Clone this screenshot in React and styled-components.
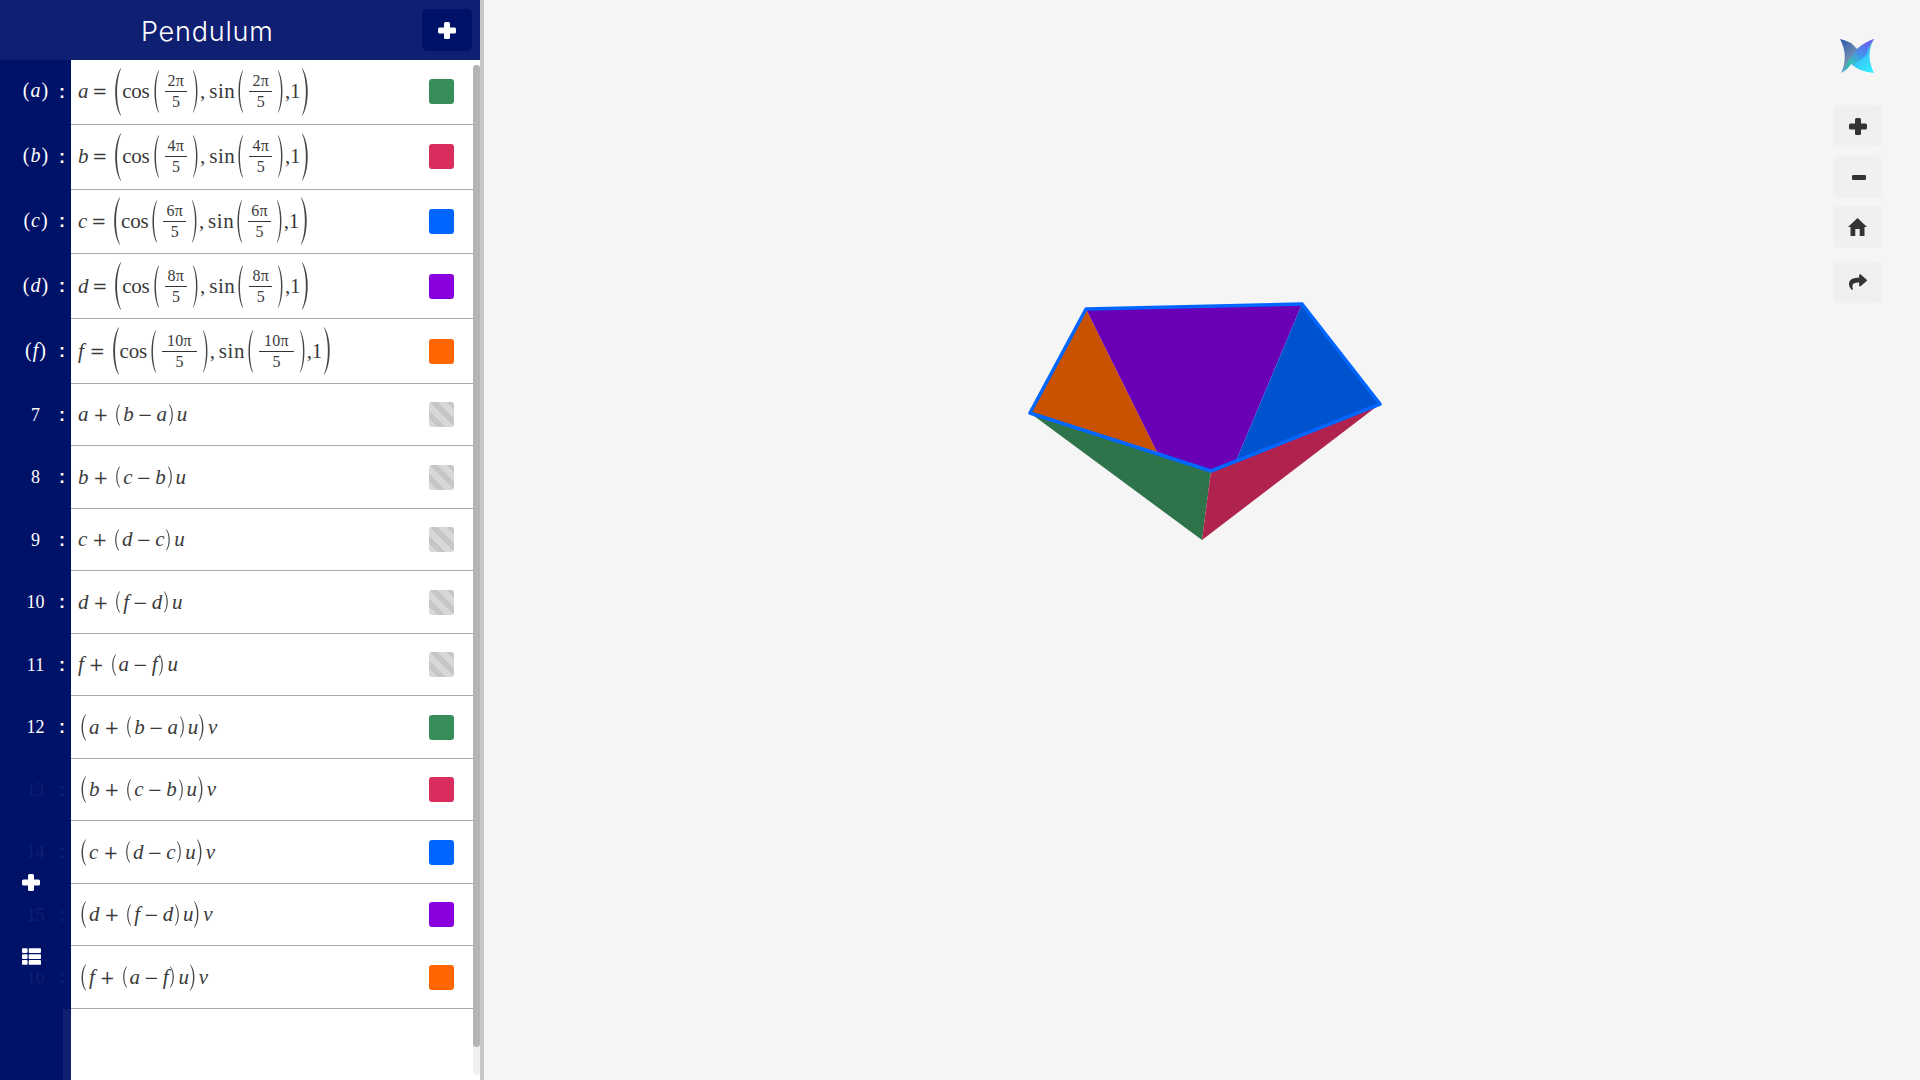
import React from "react";
import styled, { createGlobalStyle } from "styled-components";
import { FaShare, FaThList } from "react-icons/fa";

const GlobalStyle = createGlobalStyle`
  html, body {
    margin: 0;
    height: 100%;
    overflow: hidden;
    background: #f5f5f5;
  }
  #root {
    height: 100%;
  }
`;

const NAVY = "#001268";
const HEADER = "#0f2072";

const Page = styled.div`
  display: flex;
  height: 100vh;
  font-family: "Liberation Serif", serif;
`;

const Sidebar = styled.aside`
  position: relative;
  display: flex;
  flex-direction: column;
  flex: none;
  width: 480px;
  background: #fff;
`;

const Header = styled.header`
  display: flex;
  align-items: center;
  flex: none;
  height: 60px;
  background: ${HEADER};
  padding: 0 8px 0 141px;
  box-sizing: border-box;
`;

const Title = styled.h1`
  flex: 1;
  margin: 0;
  padding-top: 2px;
  font-family: Inter, sans-serif;
  font-size: 27px;
  font-weight: 300;
  letter-spacing: 0.8px;
  color: #fff;
`;

const HeaderButton = styled.button`
  display: flex;
  align-items: center;
  justify-content: center;
  width: 50px;
  height: 42px;
  padding: 0;
  border: 0;
  border-radius: 5px;
  background: ${NAVY};
  color: #fff;
`;

const Body = styled.div`
  display: flex;
  flex: 1;
  min-height: 0;
`;

const List = styled.div`
  display: flex;
  flex-direction: column;
  flex: 1;
  min-width: 0;
`;

const Row = styled.div`
  display: flex;
  flex: none;
  height: ${(p) => (p.$tall ? "64.8px" : "62.5px")};
`;

const LabelCell = styled.div`
  display: flex;
  align-items: center;
  flex: none;
  width: 71px;
  background: ${NAVY};
  font-size: 18px;
  color: ${(p) => (p.$dim ? "#0f2072" : "#fff")};
`;

const LabelName = styled.span`
  flex: none;
  width: 39px;
  margin-left: 16px;
  padding-bottom: ${(p) => (p.$big ? 3 : 0)}px;
  font-size: ${(p) => (p.$big ? 20 : 18)}px;
  text-align: center;
  white-space: nowrap;
`;

const LabelColon = styled.span`
  margin-left: 4px;
  font-family: "Liberation Sans", sans-serif;
  font-weight: 700;
`;

const LabelVar = styled.i`
  margin: 0 1px;
`;

const Content = styled.div`
  display: flex;
  align-items: center;
  flex: 1;
  min-width: 0;
  padding: 0 19px 0 7px;
  border-bottom: 1px solid #aaa;
  background: #fff;
`;

const Formula = styled.div`
  display: flex;
  align-items: center;
  flex: 1;
  font-size: 21px;
  letter-spacing: -0.2px;
  color: #3a3a3a;
  white-space: nowrap;
`;

const Var = styled.i`
  margin-right: ${(p) => p.$after || 0}px;
`;

const Op = styled.span`
  margin: ${(p) => p.$margin || "0 3px"};
  font-family: "DejaVu Serif", serif;
  font-size: 18px;
  font-weight: 300;
`;

const Word = styled.span`
  margin-left: ${(p) => p.$before || 0}px;
  letter-spacing: ${(p) => p.$tracking ?? -0.2}px;
`;

const Fraction = styled.span`
  display: inline-flex;
  flex-direction: column;
  align-items: center;
  margin: 0 6px;
  font-size: 16px;
  line-height: 18px;
`;

const Numerator = styled.span`
  padding: 0 ${(p) => (p.$wide ? 5 : 3)}px 1px;
  border-bottom: 1px solid #333;
  letter-spacing: 0.2px;
`;

const Denominator = styled.span`
  padding-top: 1px;
`;

const DelimSvg = styled.svg`
  flex: none;
  display: block;
  margin: ${(p) => p.$margin || "0"};
  transform: ${(p) => (p.$flip ? "scaleX(-1)" : "none")};
`;

const Swatch = styled.span`
  flex: none;
  width: 25px;
  height: 25px;
  border-radius: 3px;
  background: ${(p) =>
    p.$color ||
    "repeating-linear-gradient(45deg, #d8d8d8 0, #d8d8d8 6px, #c6c6c6 6px, #c6c6c6 12px)"};
`;

const Filler = styled.div`
  display: flex;
  flex: 1;
`;

const FillerGutter = styled.div`
  flex: none;
  width: 71px;
  background: ${NAVY};
  box-sizing: border-box;
  border-right: 8px solid ${HEADER};
`;

const Track = styled.div`
  flex: none;
  width: 7px;
  margin: 5px 0;
  border-radius: 4px;
  background: #f0f0f0;
`;

const Thumb = styled.div`
  height: 982px;
  border-radius: 4px;
  background: #b4b4b4;
`;

const SideAction = styled.span`
  position: absolute;
  left: 0;
  top: ${(p) => p.$top}px;
  display: flex;
  align-items: center;
  justify-content: center;
  width: 62px;
  height: ${(p) => p.$height}px;
  background: ${(p) => (p.$solid ? NAVY : "transparent")};
  color: #fff;
  font-size: 19px;
`;

const Divider = styled.div`
  flex: none;
  width: 4px;
  background: #c8c8c8;
`;

const Canvas = styled.main`
  position: relative;
  flex: 1;
  background: #f5f5f5;
`;

const Scene = styled.svg`
  position: absolute;
  left: 0;
  top: 0;
  width: 100%;
  height: 100%;
`;

const Tools = styled.div`
  position: absolute;
  top: 39px;
  right: 38px;
  display: flex;
  flex-direction: column;
  align-items: center;
  width: 49px;
`;

const Logo = styled.svg`
  display: block;
  margin-bottom: 31px;
`;

const ToolButton = styled.button`
  display: flex;
  align-items: center;
  justify-content: center;
  width: 49px;
  height: 42px;
  margin-bottom: ${(p) => p.$gap ?? 9}px;
  padding: 0;
  border: 0;
  border-radius: 5px;
  background: #f0f0f0;
  color: #333;
  font-size: 18px;
`;

function PlusIcon() {
  return (
    <svg width="18" height="17" viewBox="0 0 18 17" fill="currentColor">
      <rect x="6" y="0" width="6" height="17" rx="1.5" />
      <rect x="0" y="5.5" width="18" height="6" rx="1.5" />
    </svg>
  );
}

function MinusIcon() {
  return (
    <svg width="14" height="5" viewBox="0 0 14 5" fill="currentColor" style={{ marginLeft: 3 }}>
      <rect width="14" height="5" rx="1.2" />
    </svg>
  );
}

function HomeIcon() {
  return (
    <svg width="19" height="18" viewBox="0 0 19 18" fill="currentColor">
      <path d="M9.5 0 L19 9 L16.5 9 L16.5 18 L11.7 18 L11.7 11 L7.3 11 L7.3 18 L2.5 18 L2.5 9 L0 9 Z" />
    </svg>
  );
}

function Delim({ h, w = 7, right, margin }) {
  const path = `M${w} 0 C${w * 0.15} ${h * 0.2} ${w * 0.15} ${h * 0.8} ${w} ${h} L${w} ${h - 0.8} C${w * 0.42} ${h * 0.75} ${w * 0.42} ${h * 0.25} ${w} 0.8 Z`;
  return (
    <DelimSvg width={w} height={h} viewBox={`0 0 ${w} ${h}`} $flip={right} $margin={margin}>
      <path d={path} fill="#444" />
    </DelimSvg>
  );
}

function Frac({ num }) {
  return (
    <Fraction>
      <Numerator $wide={num > 9}>{num}π</Numerator>
      <Denominator>5</Denominator>
    </Fraction>
  );
}

function PointFormula({ name, num }) {
  return (
    <Formula>
      <Var $after={name === "f" ? 3 : 1}>{name}</Var>
      <Op>=</Op>
      <Delim h={48} w={9} margin="0 1px 0 2px" />
      <Word>cos</Word>
      <Delim h={43} margin="0 0 0 2px" />
      <Frac num={num} />
      <Delim h={43} right />
      <Word>,</Word>
      <Word $before={4} $tracking={0.6}>sin</Word>
      <Delim h={43} margin="0 0 0 1px" />
      <Frac num={num} />
      <Delim h={43} right />
      <Word>,1</Word>
      <Delim h={48} w={9} right margin="0 0 0 2px" />
    </Formula>
  );
}

function LinearFormula({ from, to, scaled }) {
  const inner = (
    <>
      <Var>{from}</Var>
      <Op $margin="0 2px 0 5px">+</Op>
      <Delim h={22} w={6} margin="0 3px 0 4px" />
      <Var>{to}</Var>
      <Op $margin="0 4px">−</Op>
      <Var>{from}</Var>
      <Delim h={22} w={6} right margin="0 2px 0 2px" />
      <Var>u</Var>
    </>
  );
  return (
    <Formula>
      {scaled ? (
        <>
          <Delim h={27} w={7} margin="0 3px 0 1px" />
          {inner}
          <Delim h={27} w={7} right margin="0 2px 0 1px" />
          <Var>v</Var>
        </>
      ) : (
        inner
      )}
    </Formula>
  );
}

const GREEN = "#388e5a";
const RED = "#d92d5e";
const BLUE = "#0066ff";
const PURPLE = "#8800dd";
const ORANGE = "#ff6600";

const points = [
  { name: "a", num: 2, color: GREEN },
  { name: "b", num: 4, color: RED },
  { name: "c", num: 6, color: BLUE },
  { name: "d", num: 8, color: PURPLE },
  { name: "f", num: 10, color: ORANGE },
];

const lines = [
  { id: 7, from: "a", to: "b" },
  { id: 8, from: "b", to: "c" },
  { id: 9, from: "c", to: "d" },
  { id: 10, from: "d", to: "f" },
  { id: 11, from: "f", to: "a" },
  { id: 12, from: "a", to: "b", scaled: true, color: GREEN },
  { id: 13, from: "b", to: "c", scaled: true, color: RED, dim: true },
  { id: 14, from: "c", to: "d", scaled: true, color: BLUE, dim: true },
  { id: 15, from: "d", to: "f", scaled: true, color: PURPLE, dim: true },
  { id: 16, from: "f", to: "a", scaled: true, color: ORANGE, dim: true },
];

// scene coordinates are relative to the canvas, which starts at x=484
const faces = [
  { fill: "#2f734b", pts: "546,413 727,471 718,540" },
  { fill: "#b0234e", pts: "727,471 896,404 718,540" },
  { fill: "#c95200", pts: "546,413 602,309 673,452" },
  { fill: "#6a00b5", pts: "602,309 818,304 752,461 727,471 673,452" },
  { fill: "#0053cf", pts: "818,304 896,404 752,461" },
];

function XLogo() {
  return (
    <Logo width="35" height="35" viewBox="0 0 35 35">
      <defs>
        <linearGradient id="wingA" x1="0" y1="0" x2="1" y2="1">
          <stop offset="0" stopColor="#2b55a6" />
          <stop offset="0.45" stopColor="#7391b4" />
          <stop offset="0.6" stopColor="#38c8f8" />
          <stop offset="1" stopColor="#30f4ff" />
        </linearGradient>
        <linearGradient id="wingB" x1="1" y1="0" x2="0" y2="1">
          <stop offset="0" stopColor="#7a3cff" />
          <stop offset="0.45" stopColor="#3f8ff0" />
          <stop offset="0.7" stopColor="#28c8b0" />
          <stop offset="1" stopColor="#1f9a78" />
        </linearGradient>
      </defs>
      <path d="M0 0 Q11 2 17 10 Q25 3 34 0 Q25 16 34 34 Q20 33 11 25 Q7 31 1 34 Q9 17 0 0 Z" fill="url(#wingA)" />
      <path d="M34 0 Q25 3 17 10 L7 24 Q7 31 1 34 Q7 31 11 25 Q22 22 27 15 Q28 7 34 0 Z" fill="url(#wingB)" fillOpacity="0.8" />
    </Logo>
  );
}

export default function App() {
  return (
    <Page>
      <GlobalStyle />
      <Sidebar>
        <Header>
          <Title>Pendulum</Title>
          <HeaderButton>
            <PlusIcon />
          </HeaderButton>
        </Header>
        <Body>
          <List>
            {points.map((p) => (
              <Row key={p.name} $tall>
                <LabelCell>
                  <LabelName $big>
                    (<LabelVar>{p.name}</LabelVar>)
                  </LabelName>
                  <LabelColon>:</LabelColon>
                </LabelCell>
                <Content>
                  <PointFormula name={p.name} num={p.num} />
                  <Swatch $color={p.color} />
                </Content>
              </Row>
            ))}
            {lines.map((l) => (
              <Row key={l.id}>
                <LabelCell $dim={l.dim}>
                  <LabelName>{l.id}</LabelName>
                  <LabelColon>:</LabelColon>
                </LabelCell>
                <Content>
                  <LinearFormula from={l.from} to={l.to} scaled={l.scaled} />
                  <Swatch $color={l.color} />
                </Content>
              </Row>
            ))}
            <Filler>
              <FillerGutter />
            </Filler>
          </List>
          <Track>
            <Thumb />
          </Track>
        </Body>
        <SideAction $top={862} $height={40}>
          <PlusIcon />
        </SideAction>
        <SideAction $top={940} $height={32} $solid>
          <FaThList />
        </SideAction>
      </Sidebar>
      <Divider />
      <Canvas>
        <Scene>
          {faces.map((f) => (
            <polygon key={f.fill} points={f.pts} fill={f.fill} />
          ))}
          <polygon
            points="546,413 602,309 818,304 896,404 727,471"
            fill="none"
            stroke="#0066ff"
            strokeWidth="3.5"
            strokeLinejoin="round"
          />
        </Scene>
        <Tools>
          <XLogo />
          <ToolButton>
            <PlusIcon />
          </ToolButton>
          <ToolButton $gap={8}>
            <MinusIcon />
          </ToolButton>
          <ToolButton $gap={13}>
            <HomeIcon />
          </ToolButton>
          <ToolButton>
            <FaShare />
          </ToolButton>
        </Tools>
      </Canvas>
    </Page>
  );
}
